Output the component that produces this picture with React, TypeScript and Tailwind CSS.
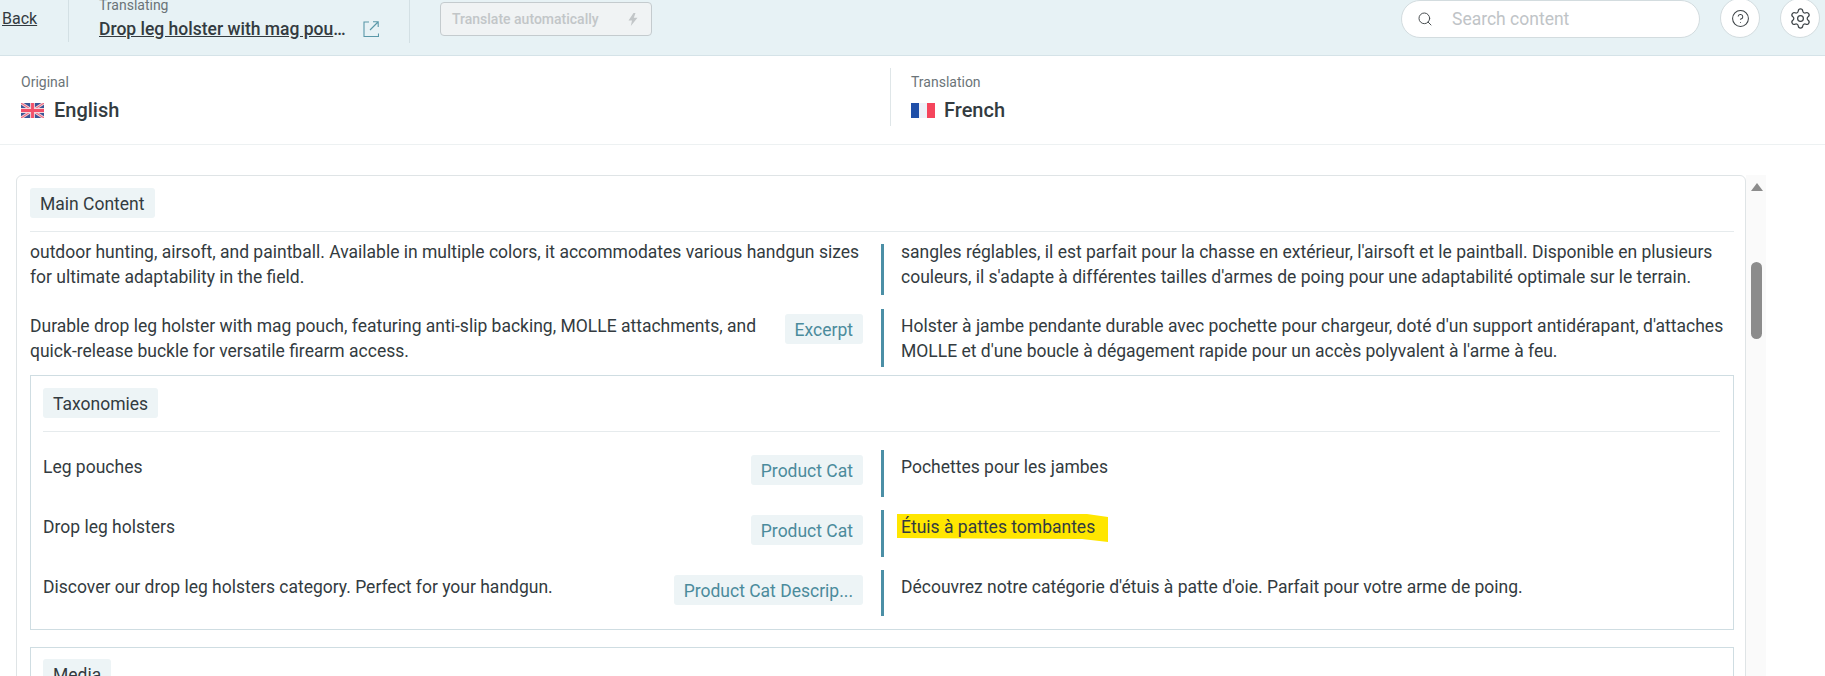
import { CircleHelp, Search, Settings } from "lucide-react";

const FONT = "font-['Roboto',sans-serif]";

function UkFlag() {
  return (
    <svg width="23" height="15" viewBox="0 0 24 15" preserveAspectRatio="none">
      <rect width="24" height="15" fill="#3a5596" />
      <path d="M0 0L24 15M24 0L0 15" stroke="#f0c8d0" strokeWidth="3" />
      <path d="M0 0L24 15M24 0L0 15" stroke="#ef5a72" strokeWidth="1" />
      <path d="M12 0V15M0 7.5H24" stroke="#f3d5db" strokeWidth="5" />
      <path d="M12 0V15M0 7.5H24" stroke="#f2506a" strokeWidth="3" />
    </svg>
  );
}

function FrFlag() {
  return (
    <div className="flex h-[15px] w-[24px]">
      <div className="flex-1 bg-[#1f4fa8]" />
      <div className="flex-1 bg-[#eef1f8]" />
      <div className="flex-1 bg-[#f5455c]" />
    </div>
  );
}

function ExternalIcon() {
  return (
    <svg width="16" height="16" viewBox="0 0 16 16" fill="none" stroke="#5a98a8" strokeWidth="1.1">
      <path d="M6 1H1V15.5H15.5V12.5" />
      <path d="M7 9L15 1M10 0.8H15.2V6" />
    </svg>
  );
}

function Badge({ children, label }: { children: string; label?: boolean }) {
  return (
    <span
      className={`inline-block h-[30px] shrink-0 whitespace-nowrap rounded-[3px] bg-[#edf4f6] px-[10px] text-[17.5px] leading-[32px] ${
        label ? "text-[#333b40]" : "text-[#4b8b9c]"
      }`}
    >
      {children}
    </span>
  );
}

function Row({
  cols,
  left,
  right,
  badge,
  height,
  scrolled,
}: {
  cols: string;
  left: React.ReactNode;
  right: React.ReactNode;
  badge?: string;
  height: string;
  scrolled?: boolean;
}) {
  return (
    <div className={`grid ${cols} ${height}`}>
      <div className="flex items-start justify-between gap-[20px] pr-[18px]">
        <div className={`whitespace-nowrap leading-[24.5px] ${scrolled ? "-mt-[4px]" : "pt-[5px]"}`}>{left}</div>
        {badge && (
          <div className="mt-[5px]">
            <Badge>{badge}</Badge>
          </div>
        )}
      </div>
      <div className={`whitespace-nowrap border-l-[3px] border-[#4b8fa6] pl-[17px] leading-[24.5px] ${scrolled ? "" : "pt-[5px]"}`}>
        <div className={scrolled ? "-mt-[4px]" : ""}>{right}</div>
      </div>
    </div>
  );
}

export default function App() {
  return (
    <div className={`h-[676px] w-[1825px] overflow-hidden bg-white text-[17.5px] text-[#333b40] ${FONT}`}>
      {/* TOP BAR */}
      <div className="flex h-[56px] items-start overflow-hidden border-b border-[#d5e3e8] bg-[#e7f2f5]">
        <a className="ml-[2px] mt-[9px] w-[66px] text-[16px] leading-[20px] underline">Back</a>
        <div className="h-[42px] w-px bg-[#d3e0e4]" />
        <div className="-mt-[5px] ml-[30px] w-[310px]">
          <div className="text-[14px] leading-[20px] text-[#6b7478]">Translating</div>
          <div className="mt-[4px] flex items-center">
            <a className="w-[247px] truncate text-[17.5px] font-medium leading-[20px] underline">Drop leg holster with mag pouch, anti-slip</a>
            <span className="ml-[17px]">
              <ExternalIcon />
            </span>
          </div>
        </div>
        <div className="h-[43px] w-px bg-[#d3e0e4]" />
        <button className="ml-[30px] mt-[2px] flex h-[34px] w-[212px] items-center justify-between rounded-[4px] border border-[#c4cbce] bg-[#f0f3f4] pl-[11px] pr-[13px] text-[14px] font-medium text-[#c2c6c8]">
          Translate automatically
          <svg width="10" height="13" viewBox="0 0 10 13" fill="#c2c6c8">
            <path d="M5.5 0L0.5 7.5H4L2.8 13L9.5 4.8H5.8L7.5 0Z" />
          </svg>
        </button>
        <div className="ml-auto flex items-start">
          <div className="flex h-[38px] w-[299px] items-center rounded-full border border-[#d3dcdf] bg-white pl-[15px]">
            <Search size={16} strokeWidth={1.5} className="text-[#4a4f52]" />
            <span className="ml-[19px] text-[#c0c4c7]">Search content</span>
          </div>
          <div className="-mt-[2px] ml-[20px] flex size-[40px] items-center justify-center rounded-full border border-[#d3dcdf] bg-white">
            <CircleHelp size={19} strokeWidth={1.3} className="text-[#3d4347]" />
          </div>
          <div className="-mt-[2px] ml-[20px] mr-[5px] flex size-[40px] items-center justify-center rounded-full border border-[#d3dcdf] bg-white">
            <Settings size={23} strokeWidth={1.3} className="text-[#3d4347]" />
          </div>
        </div>
      </div>

      {/* LANGUAGES */}
      <div className="flex h-[89px] border-b border-[#edf1f2]">
        <div className="w-[890px] pl-[21px] pt-[16px]">
          <div className="text-[14px] leading-[20px] text-[#6b7478]">Original</div>
          <div className="mt-[8px] flex h-[20px] items-center gap-[10px] text-[20px] font-medium">
            <UkFlag />
            English
          </div>
        </div>
        <div className="mt-[12px] h-[58px] border-l border-[#dfe6e8] pl-[20px] pt-[4px]">
          <div className="text-[14px] leading-[20px] text-[#6b7478]">Translation</div>
          <div className="mt-[8px] flex h-[20px] items-center gap-[9px] text-[20px] font-medium">
            <FrFlag />
            French
          </div>
        </div>
      </div>

      {/* CONTENT */}
      <div className="ml-[16px] mt-[30px] flex h-[600px] items-start">
        <div className="w-[1730px] rounded-t-[6px] border border-[#dfe4e6] pl-[13px] pr-[11px] pt-[12px]">
          <Badge label>Main Content</Badge>
          <div className="mb-[12px] mt-[13px] h-px bg-[#e6ebed]" />

          <Row
            cols="grid-cols-[851px_853px]"
            height="h-[51px]"
            scrolled
            left={
              <>
                outdoor hunting, airsoft, and paintball. Available in multiple colors, it accommodates various handgun sizes
                <br />
                for ultimate adaptability in the field.
              </>
            }
            right={
              <>
                sangles réglables, il est parfait pour la chasse en extérieur, l'airsoft et le paintball. Disponible en plusieurs
                <br />
                couleurs, il s'adapte à différentes tailles d'armes de poing pour une adaptabilité optimale sur le terrain.
              </>
            }
          />
          <div className="mt-[14px]">
            <Row
              cols="grid-cols-[851px_853px]"
              height="h-[58px]"
              badge="Excerpt"
              left={
                <>
                  Durable drop leg holster with mag pouch, featuring anti-slip backing, MOLLE attachments, and
                  <br />
                  quick-release buckle for versatile firearm access.
                </>
              }
              right={
                <>
                  Holster à jambe pendante durable avec pochette pour chargeur, doté d'un support antidérapant, d'attaches
                  <br />
                  MOLLE et d'une boucle à dégagement rapide pour un accès polyvalent à l'arme à feu.
                </>
              }
            />
          </div>

          {/* TAXONOMIES */}
          <div className="mt-[8px] h-[255px] border border-[#cfdde2] pl-[12px] pr-[13px] pt-[12px]">
            <Badge label>Taxonomies</Badge>
            <div className="mb-[18px] mt-[13px] h-px bg-[#e6ebed]" />
            <div className="flex flex-col gap-[13px]">
              <Row
                cols="grid-cols-[838px_839px]"
                height="h-[47px]"
                badge="Product Cat"
                left="Leg pouches"
                right="Pochettes pour les jambes"
              />
              <Row
                cols="grid-cols-[838px_839px]"
                height="h-[47px]"
                badge="Product Cat"
                left="Drop leg holsters"
                right={
                  <span className="relative isolate inline-block">
                    <svg width="211" height="28" viewBox="0 0 211 28" className="absolute -left-[4px] -top-px -z-10">
                      <path d="M0 0H190L211 3V28L185 25L0 24Z" fill="#ffe600" />
                    </svg>
                    Étuis à pattes tombantes
                  </span>
                }
              />
              <Row
                cols="grid-cols-[838px_839px]"
                height="h-[46px]"
                badge="Product Cat Descrip..."
                left="Discover our drop leg holsters category. Perfect for your handgun."
                right="Découvrez notre catégorie d'étuis à patte d'oie. Parfait pour votre arme de poing."
              />
            </div>
          </div>

          {/* MEDIA */}
          <div className="mt-[17px] h-[100px] border border-[#cfdde2] pl-[12px] pt-[11px]">
            <Badge label>Media</Badge>
          </div>
        </div>

        {/* SCROLLBAR */}
        <div className="flex h-full w-[20px] flex-col bg-[#fafafa] pl-[5px]">
          <svg width="12" height="8" viewBox="0 0 12 8" className="mt-[8px]" fill="#8c8c8c">
            <path d="M6 0L12 8H0Z" />
          </svg>
          <div className="mt-[71px] h-[77px] w-[11px] rounded-full bg-[#8c8c8c]" />
        </div>
      </div>
    </div>
  );
}
